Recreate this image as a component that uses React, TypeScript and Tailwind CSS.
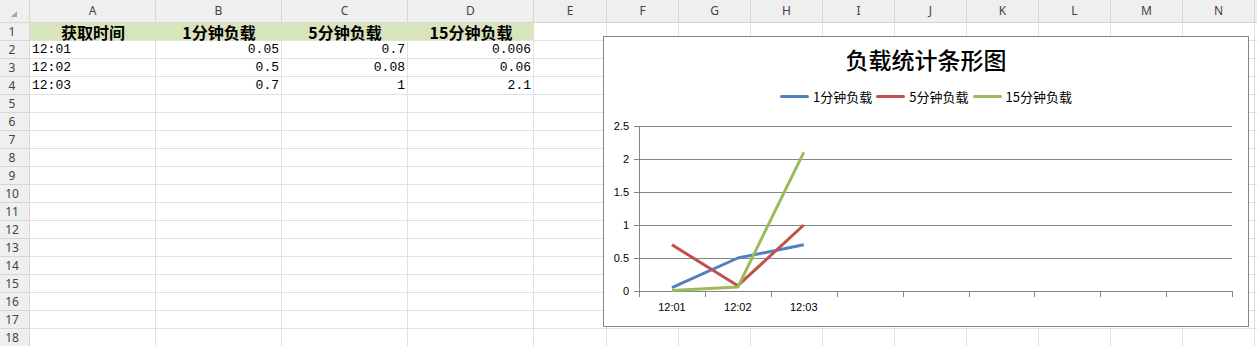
import React from 'react';

const COLS = ['A', 'B', 'C', 'D', 'E', 'F', 'G', 'H', 'I', 'J', 'K', 'L', 'M', 'N', 'O'];

const HEADERS = ['获取时间', '1分钟负载', '5分钟负载', '15分钟负载'];

const DATA = [
  { time: '12:01', m1: '0.05', m5: '0.7', m15: '0.006' },
  { time: '12:02', m1: '0.5', m5: '0.08', m15: '0.06' },
  { time: '12:03', m1: '0.7', m5: '1', m15: '2.1' },
];

const SERIES = [
  { name: '1分钟负载', color: '#4f81bd', values: [0.05, 0.5, 0.7] },
  { name: '5分钟负载', color: '#c0504d', values: [0.7, 0.08, 1] },
  { name: '15分钟负载', color: '#9bbb59', values: [0.006, 0.06, 2.1] },
];

const mono = { fontFamily: '"Liberation Mono", "Noto Sans CJK SC", monospace' };
const cjk = { fontFamily: '"Noto Sans CJK SC", "Liberation Sans", sans-serif' };

// plot geometry, page coordinates
const X0 = 639;
const STEP = 65.9;
const Y0 = 291;
const UNIT = 66;
const yOf = (v: number) => Y0 - v * UNIT;

function Chart() {
  const ticks = [0, 0.5, 1, 1.5, 2, 2.5];
  const cats = Array.from({ length: 10 }, (_, i) => X0 + i * STEP);

  return (
    <div className="absolute left-[603px] top-[36px] w-[646px] h-[291px] border border-[#868686] bg-white">
      <div className="flex flex-col items-center">
        <div className="mt-[11px] text-[23px] leading-[23px] font-medium text-black" style={cjk}>
          负载统计条形图
        </div>
        <div className="mt-[19px] flex items-center gap-[4px] text-[13px] leading-[13px] text-black" style={cjk}>
          {SERIES.map((s) => (
            <div key={s.name} className="flex items-center gap-[4px]">
              <span className="block w-[29px] h-[3px] rounded-full" style={{ background: s.color }} />
              <span>{s.name}</span>
            </div>
          ))}
        </div>
      </div>

      <svg className="absolute inset-0" width="644" height="289">
        <g transform="translate(-604,-37)" fontFamily="Liberation Sans, Arial, sans-serif" fontSize="11">
          {ticks.map((t) => (
            <g key={t}>
              <line x1={634} x2={t === 0 ? 639 : 1232} y1={yOf(t) + 0.5} y2={yOf(t) + 0.5} stroke="#868686" />
              <text x={629} y={yOf(t) + 4} textAnchor="end" fill="#000">
                {t}
              </text>
            </g>
          ))}
          <line x1={639.5} x2={639.5} y1={126} y2={297} stroke="#868686" />
          <line x1={639} x2={1233} y1={291.5} y2={291.5} stroke="#868686" />
          {cats.map((x) => (
            <line key={x} x1={Math.round(x) + 0.5} x2={Math.round(x) + 0.5} y1={291} y2={297} stroke="#868686" />
          ))}
          {DATA.map((d, i) => (
            <text key={d.time} x={X0 + STEP * (i + 0.5)} y={311} textAnchor="middle" fill="#000">
              {d.time}
            </text>
          ))}
          {SERIES.map((s) => (
            <polyline
              key={s.name}
              fill="none"
              stroke={s.color}
              strokeWidth={3}
              strokeLinejoin="round"
              points={s.values.map((v, i) => `${X0 + STEP * (i + 0.5)},${yOf(v)}`).join(' ')}
            />
          ))}
        </g>
      </svg>
    </div>
  );
}

export default function App() {
  const rows = Array.from({ length: 18 }, (_, i) => i + 1);

  return (
    <div className="relative w-[1257px] h-[346px] overflow-hidden bg-white">
      <div className="grid grid-cols-[30px_126px_126px_126px_126px_73px_repeat(10,72px)] grid-rows-[23px_repeat(18,18px)]">
        {/* column header row */}
        <div className="relative bg-[#efefef] border-r border-b border-[#d6d6d6]">
          <svg className="absolute left-[11px] top-[11px]" width="6" height="6">
            <polygon points="6,0 6,6 0,6" fill="#a6a6a6" />
          </svg>
        </div>
        {COLS.map((c) => (
          <div
            key={c}
            className="flex items-center justify-center bg-[#efefef] border-r border-b border-[#d6d6d6] text-[12px] text-[#444]"
            style={{ fontFamily: '"Noto Sans", sans-serif' }}
          >
            {c === 'O' ? '' : c}
          </div>
        ))}

        {rows.map((r) => (
          <React.Fragment key={r}>
            <div
              className="flex items-center justify-center pr-[5px] bg-[#efefef] border-r border-b border-[#d6d6d6] text-[12px] text-[#444]"
              style={{ fontFamily: '"Noto Sans", sans-serif' }}
            >
              {r}
            </div>
            {COLS.map((c, ci) => {
              if (r === 1 && ci < 4) {
                return (
                  <div
                    key={c}
                    className="flex items-center justify-center bg-[#d8e4bc] border-b border-[#e1e1e1] font-bold text-[16px] leading-none text-black"
                    style={cjk}
                  >
                    {HEADERS[ci]}
                  </div>
                );
              }
              const d = r >= 2 && r <= 4 ? DATA[r - 2] : null;
              let text = '';
              if (d && ci === 0) text = d.time;
              if (d && ci === 1) text = d.m1;
              if (d && ci === 2) text = d.m5;
              if (d && ci === 3) text = d.m15;
              return (
                <div
                  key={c}
                  className={`flex items-center border-r border-b border-[#e1e1e1] text-[13px] leading-none text-black ${
                    ci === 0 ? 'justify-start pl-[2px]' : 'justify-end pr-[2px]'
                  }`}
                  style={mono}
                >
                  {text}
                </div>
              );
            })}
          </React.Fragment>
        ))}
      </div>

      <Chart />
    </div>
  );
}
